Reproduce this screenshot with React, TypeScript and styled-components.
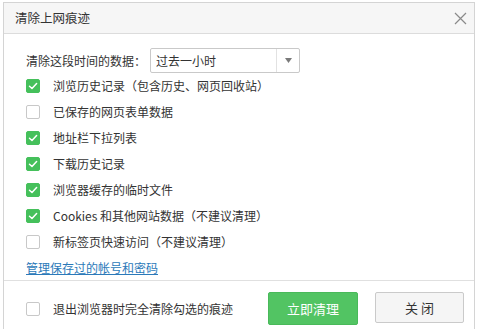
import React, { useState } from 'react';
import styled, { createGlobalStyle } from 'styled-components';

const GlobalStyle = createGlobalStyle`
  html, body {
    margin: 0;
    padding: 0;
    background: #ffffff;
  }
  body {
    font-family: "Noto Sans CJK SC", "Liberation Sans", sans-serif;
    color: #333333;
  }
`;

interface Option {
  label: string;
  checked: boolean;
}

const initialOptions: Option[] = [
  { label: '浏览历史记录（包含历史、网页回收站）', checked: true },
  { label: '已保存的网页表单数据', checked: false },
  { label: '地址栏下拉列表', checked: true },
  { label: '下载历史记录', checked: true },
  { label: '浏览器缓存的临时文件', checked: true },
  { label: 'Cookies 和其他网站数据（不建议清理）', checked: true },
  { label: '新标签页快速访问（不建议清理）', checked: false },
];

const CheckMark = () => (
  <svg width="10" height="10" viewBox="0 0 10 10">
    <path d="M1.5 5.2 L4 7.5 L8.6 2.6" fill="none" stroke="#ffffff" strokeWidth="1.5" strokeLinecap="round" strokeLinejoin="round" />
  </svg>
);

const App = () => {
  const [options, setOptions] = useState(initialOptions);
  const [clearOnExit, setClearOnExit] = useState(false);

  const toggle = (index: number) => {
    setOptions(options.map((o, i) => (i === index ? { ...o, checked: !o.checked } : o)));
  };

  return (
    <>
      <GlobalStyle />
      <Dialog>
        <TitleBar>
          <Title>清除上网痕迹</Title>
          <CloseIcon aria-label="关闭">
            <svg width="13" height="13" viewBox="0 0 13 13">
              <path d="M1 1 L12 12 M12 1 L1 12" stroke="#8a8a8a" strokeWidth="1.2" />
            </svg>
          </CloseIcon>
        </TitleBar>
        <Body>
          <RangeRow>
            <RangeLabel>清除这段时间的数据：</RangeLabel>
            <Select>
              <SelectValue>过去一小时</SelectValue>
              <SelectArrow>
                <svg width="7" height="5" viewBox="0 0 7 5">
                  <path d="M0 0 L7 0 L3.5 5 Z" fill="#7a7a7a" />
                </svg>
              </SelectArrow>
            </Select>
          </RangeRow>
          <OptionList>
            {options.map((o, i) => (
              <OptionRow key={i} onClick={() => toggle(i)}>
                <Box checked={o.checked}>{o.checked && <CheckMark />}</Box>
                <OptionText>{o.label}</OptionText>
              </OptionRow>
            ))}
          </OptionList>
          <LinkRow>
            <ManageLink href="#">管理保存过的帐号和密码</ManageLink>
          </LinkRow>
        </Body>
        <Footer>
          <OptionRow onClick={() => setClearOnExit(!clearOnExit)}>
            <Box checked={clearOnExit}>{clearOnExit && <CheckMark />}</Box>
            <OptionText>退出浏览器时完全清除勾选的痕迹</OptionText>
          </OptionRow>
          <Buttons>
            <PrimaryButton>立即清理</PrimaryButton>
            <SecondaryButton>关 闭</SecondaryButton>
          </Buttons>
        </Footer>
      </Dialog>
    </>
  );
};

const Dialog = styled.div`
  margin: 2px 0 0 3px;
  width: 472px;
  box-sizing: border-box;
  border: 1px solid #d4d4d4;
  border-bottom: none;
  background: #ffffff;
`;

const TitleBar = styled.div`
  height: 30px;
  display: flex;
  align-items: center;
  justify-content: space-between;
  padding: 0 7px 0 11px;
  background: #f6f6f6;
  border-bottom: 1px solid #dcdcdc;
`;

const Title = styled.div`
  font-size: 12.5px;
  line-height: 16px;
  color: #333333;
`;

const CloseIcon = styled.div`
  width: 13px;
  height: 13px;
  display: flex;
`;

const Body = styled.div`
  padding: 14px 0 0 22px;
`;

const RangeRow = styled.div`
  display: flex;
  align-items: center;
  height: 25px;
`;

const RangeLabel = styled.div`
  font-size: 12px;
  line-height: 16px;
  width: 124px;
`;

const Select = styled.div`
  display: flex;
  align-items: stretch;
  width: 150px;
  height: 25px;
  box-sizing: border-box;
  border: 1px solid #c9c9c9;
  border-radius: 2px;
  background: #ffffff;
`;

const SelectValue = styled.div`
  flex: 1;
  display: flex;
  align-items: center;
  padding-left: 5px;
  font-size: 12px;
  color: #333333;
  border-right: 1px solid #e2e2e2;
`;

const SelectArrow = styled.div`
  width: 22px;
  display: flex;
  align-items: center;
  justify-content: center;
`;

const OptionList = styled.div`
  display: flex;
  flex-direction: column;
`;

const OptionRow = styled.div`
  display: flex;
  align-items: center;
  height: 26px;
  cursor: pointer;
`;

const Box = styled.div<{ checked: boolean }>`
  width: 14px;
  height: 14px;
  box-sizing: border-box;
  border-radius: 2px;
  margin-right: 13px;
  display: flex;
  align-items: center;
  justify-content: center;
  background: ${(p) => (p.checked ? '#45c05b' : '#ffffff')};
  border: 1px solid ${(p) => (p.checked ? '#45c05b' : '#c8c8c8')};
`;

const OptionText = styled.span`
  font-size: 12px;
  line-height: 16px;
  color: #333333;
`;

const LinkRow = styled.div`
  height: 25px;
  display: flex;
  align-items: center;
`;

const ManageLink = styled.a`
  font-size: 12px;
  line-height: 16px;
  color: #2b79b9;
  text-decoration: underline;
`;

const Footer = styled.div`
  border-top: 1px solid #e0e0e0;
  display: flex;
  align-items: center;
  justify-content: space-between;
  padding: 11px 10px 12px 22px;
`;

const Buttons = styled.div`
  display: flex;
  gap: 17px;
`;

const PrimaryButton = styled.button`
  width: 90px;
  height: 33px;
  border: 1px solid #49b95a;
  border-radius: 2px;
  background: #52c463;
  color: #ffffff;
  font-family: "Noto Sans CJK SC", sans-serif;
  font-size: 13px;
  cursor: pointer;
`;

const SecondaryButton = styled.button`
  width: 89px;
  height: 31px;
  border: 1px solid #cacaca;
  border-radius: 2px;
  background: #f5f5f5;
  color: #333333;
  font-family: "Noto Sans CJK SC", sans-serif;
  font-size: 13px;
  cursor: pointer;
`;

export default App;
